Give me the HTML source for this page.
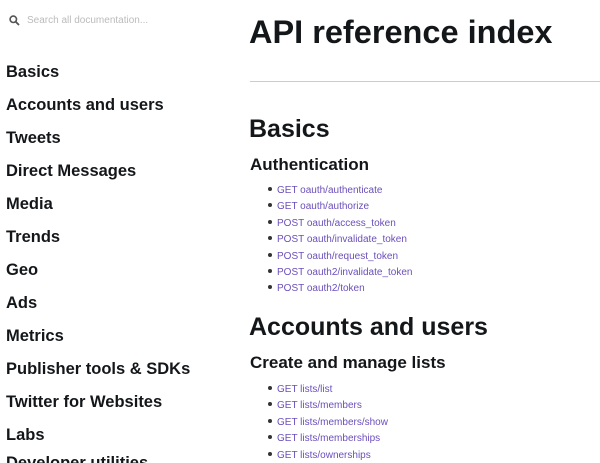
<!DOCTYPE html><html><head><style>
html,body{margin:0;width:600px;height:463px;overflow:hidden}
body{background:#fff;font-family:"Liberation Sans",Arial,sans-serif;color:#14171a;position:relative}
.s{position:absolute;left:6px;font-weight:bold;font-size:16.5px;line-height:20px;white-space:nowrap}
.a{position:absolute;white-space:nowrap;font-weight:bold}
ul{position:absolute;left:268px;margin:0;padding:0;list-style:none}
li{font-size:10px;line-height:16.4px;color:#6b4fbb;white-space:nowrap}
li:before{content:"";display:inline-block;width:4px;height:4px;border-radius:2px;background:#333;margin-right:5px;vertical-align:2px}
</style></head><body>
<svg style="position:absolute;left:9px;top:15px" width="11" height="11" viewBox="0 0 11 11"><circle cx="4.3" cy="4.3" r="3.2" fill="none" stroke="#555" stroke-width="1.6"/><line x1="6.6" y1="6.6" x2="10" y2="10" stroke="#555" stroke-width="1.8"/></svg>
<div style="position:absolute;left:27px;top:15px;font-size:10px;color:#bbb">Search all documentation...</div>
<div class="s" style="top:62px">Basics</div>
<div class="s" style="top:95px">Accounts and users</div>
<div class="s" style="top:128px">Tweets</div>
<div class="s" style="top:161px">Direct Messages</div>
<div class="s" style="top:194px">Media</div>
<div class="s" style="top:227px">Trends</div>
<div class="s" style="top:260px">Geo</div>
<div class="s" style="top:293px">Ads</div>
<div class="s" style="top:326px">Metrics</div>
<div class="s" style="top:359px">Publisher tools &amp; SDKs</div>
<div class="s" style="top:392px">Twitter for Websites</div>
<div class="s" style="top:425px">Labs</div>
<div class="s" style="top:453px">Developer utilities</div>
<div class="a" style="left:249px;top:12px;font-size:32.5px;line-height:40px">API reference index</div>
<div style="position:absolute;left:250px;top:81px;width:350px;height:1px;background:#ccc"></div>
<div class="a" style="left:249px;top:114px;font-size:25px;line-height:30px">Basics</div>
<div class="a" style="left:250px;top:155px;font-size:17px;line-height:20px">Authentication</div>
<ul style="top:183px"><li>GET oauth/authenticate</li><li>GET oauth/authorize</li><li>POST oauth/access_token</li><li>POST oauth/invalidate_token</li><li>POST oauth/request_token</li><li>POST oauth2/invalidate_token</li><li>POST oauth2/token</li></ul>
<div class="a" style="left:249px;top:312px;font-size:25px;line-height:30px">Accounts and users</div>
<div class="a" style="left:250px;top:353px;font-size:17px;line-height:20px">Create and manage lists</div>
<ul style="top:382px"><li>GET lists/list</li><li>GET lists/members</li><li>GET lists/members/show</li><li>GET lists/memberships</li><li>GET lists/ownerships</li></ul>
</body></html>
